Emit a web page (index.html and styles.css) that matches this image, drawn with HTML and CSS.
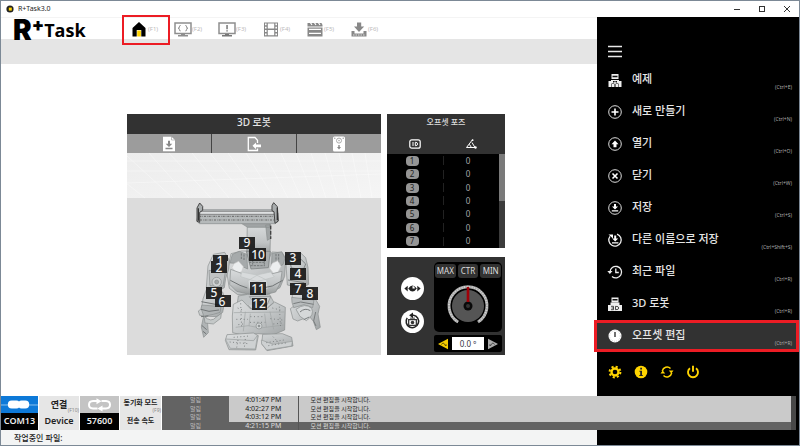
FILE: index.html
```html
<!DOCTYPE html>
<html lang="ko">
<head>
<meta charset="utf-8">
<title>R+Task3.0</title>
<link rel="stylesheet" href="styles.css">
</head>
<body>
<div class="app">
  <header class="titlebar">
    <svg class="app-icon" viewBox="0 0 8 8"><circle cx="4" cy="4" r="3.6" fill="#222"/><rect x="2.8" y="2.6" width="3" height="3" fill="#ffd400"/></svg>
    <span class="app-title">R+Task3.0</span>
    <button class="win-btn" aria-label="Minimize"><svg viewBox="0 0 8 8"><path d="M1 4.5h6"/></svg></button>
    <button class="win-btn" aria-label="Maximize"><svg viewBox="0 0 8 8"><rect x="1.5" y="1.5" width="5" height="5"/></svg></button>
    <button class="win-btn" aria-label="Close"><svg viewBox="0 0 8 8"><path d="M1 1l6 6M7 1L1 7"/></svg></button>
  </header>

  <div class="stage">
    <nav class="toolbar">
      <div class="logo"><span class="logo-r">R</span><span class="logo-plus">+</span><span class="logo-task">Task</span></div>
      <button class="tool tool-home" aria-label="Home"><svg viewBox="0 0 18 16"><path d="M9 1L2.500 7v8.500h4.200V9h4.600v6.500h4.200V7z" fill="#000"/><path d="M7.200 9.500h3.700v6H7.200z" fill="#ffd400"/></svg><span>(F1)</span></button>
      <button class="tool" aria-label="Task"><svg viewBox="0 0 18 16"><rect x="1" y="2" width="16" height="10.500" fill="none" stroke="#8e8e8e" stroke-width="1.500"/><path d="M6.600 4.500q-1.300 0-1.200 1.300t-1.200 1.400q1.300 0 1.200 1.400t1.200 1.300M11.400 4.500q1.300 0 1.200 1.300t1.200 1.400q-1.300 0-1.200 1.400t-1.200 1.300" fill="none" stroke="#888"/><path d="M7 13h4v1h3v1.500H4V14h3z" fill="#8e8e8e"/></svg><span>(F2)</span></button>
      <button class="tool" aria-label="Alert"><svg viewBox="0 0 18 16"><rect x="1" y="2" width="16" height="10.500" fill="none" stroke="#8e8e8e" stroke-width="1.500"/><path d="M8.300 4h1.500v4.300H8.300zM8.300 9.200h1.500v1.400H8.300zM7 13h4v1h3v1.500H4V14h3z" fill="#777"/></svg><span>(F3)</span></button>
      <button class="tool" aria-label="Motion"><svg viewBox="0 0 18 16"><path d="M2 1.500h14v14H2z" fill="#888"/><path d="M5.800 2.500h6.400v5H5.800zM5.800 9h6.400v5.200H5.800z" fill="#fff"/><path d="M3.800 2.500v12.500M14.200 2.500v12.500" stroke="#fff" stroke-width="1.600" stroke-dasharray="1.800 1.500"/></svg><span>(F4)</span></button>
      <button class="tool" aria-label="Scene"><svg viewBox="0 0 18 16"><path d="M1.500 6.500h15v9h-15zM1.500 2h15v3.500h-15z" fill="#888"/><path d="M4 1l2 3M8 1l2 3M12 1l2 3M15.500 1l1.500 2.500" stroke="#fff" stroke-width="1.200"/><path d="M3 8.300h12M3 12.300h12" stroke="#fff" stroke-width="1.300"/></svg><span>(F5)</span></button>
      <button class="tool" aria-label="Download"><svg viewBox="0 0 18 16"><path d="M7 1.500h4.200v4h3L9 11 4 5.500h3z" fill="#888"/><path d="M1.500 10h3v2.500h9V10h3v5.500h-15z" fill="#888"/><path d="M3 14h12" stroke="#fff" stroke-width=".7" stroke-dasharray="1.500 1"/></svg><span>(F6)</span></button>
    </nav>
    <div class="ribbon"></div>

    <main class="workspace">
      <section class="robot-panel">
        <h2 class="robot-title">3D 로봇</h2>
        <div class="robot-tools">
          <button aria-label="Load pose"><svg viewBox="0 0 14 16"><path d="M1 .7h8.500L13 4v11.300H1z" fill="#fff"/><path d="M9.500.7V4H13" fill="none" stroke="#999" stroke-width=".6"/><path d="M6 4.800h2v3h2.300L7 11 3.700 7.800H6zM3.500 11.800h7v1.400h-7z" fill="#888"/></svg></button>
          <button aria-label="Export pose"><svg viewBox="0 0 14 16"><path d="M10.500 7V4.300L8 1.500H1.300v13h9.200v-2" fill="none" stroke="#fff" stroke-width="1.300"/><path d="M5.500 9.800L9 6.500v2h5v2.700H9v2z" fill="#fff"/></svg></button>
          <button aria-label="Controller"><svg viewBox="0 0 14 16"><rect x="1" y=".5" width="12" height="15" rx="1.500" fill="#fff"/><circle cx="7" cy="4.600" r="2.500" fill="none" stroke="#aaa"/><circle cx="7" cy="4.600" r=".8" fill="#aaa"/><circle cx="2.800" cy="2.300" r=".7" fill="#999"/><circle cx="11.200" cy="2.300" r=".7" fill="#999"/><path d="M6.300 9h1.400v2H9l-2 2.600L5 11h1.300z" fill="#888"/></svg></button>
        </div>
        <svg class="robot-view" viewBox="0 0 254 202" role="img" aria-label="3D 로봇">
          <defs>
            <linearGradient id="metal" x2="1" y2="1"><stop stop-color="#dcdedf"/><stop offset=".45" stop-color="#c8cbcc"/><stop offset="1" stop-color="#a0a4a5"/></linearGradient>
            <linearGradient id="plate" x2="0" y2="1"><stop stop-color="#d9dcdd"/><stop offset=".6" stop-color="#c0c3c4"/><stop offset="1" stop-color="#979b9b"/></linearGradient>
            <linearGradient id="sky" x2="1" y2="1"><stop stop-color="#ececec"/><stop offset="1" stop-color="#f5f5f5"/></linearGradient>
          </defs>
          <rect width="254" height="202" fill="#dcdcdc"/>
          <rect width="254" height="45" fill="url(#sky)"/>
          <path d="M0 18h254M0 30l254-9M0 8h254M-20 15l38 30M0 3l46 42M22 0l40 45M42 0l42 45M65 0l37 45M83 0l36 45M101 0l32 45M119 0l28 45M137 0l24 45M154 0l20 45M169 0l18 45M184 0l15 45M198 0l13 45M212 0l11 45M225 0l9 45M238 0l7 45" fill="none" stroke="#fff" stroke-width=".6" opacity=".6"/>
          <g transform="translate(63 42) scale(.33333)" stroke="#888c8d" stroke-width="2" stroke-linejoin="round">
            <path d="M172 88h70l-2 92h-70z" fill="url(#plate)"/>
            <path d="M154 85h85v12h-66zM227 90h15v40l-10 6z" fill="#a0a4a5"/>
            <path d="M242 92v40" stroke="#444" stroke-width="4" stroke-dasharray="11 5"/>
            <path d="M28 44h224l12 10v26l-10 6H28l-8-8z" fill="#b5b9ba"/>
            <path d="M30 49h222l4 9H27z" fill="#dee0e1" stroke="#666"/>
            <path d="M28 64h226M30 75h224" fill="none" stroke="#666" stroke-width="3" stroke-dasharray="6 3 2 3"/>
            <path d="M21 79V39l8-15 9 10v12l-9 6v30zM246 47V32l5-9 11 12 3 43-10 7-3-35z" fill="#a9adae" stroke="#444" stroke-width="3"/>
            <path d="M25 40v37M262 38v38" stroke="#333" stroke-width="4"/>
            <path d="M123 176l32-8h15l12 46 38 2 18-28 8-17 31 2 10 17-3 54-14 34-39 21h-88l-25-19-7-44z" fill="url(#metal)"/>
            <path d="M127 178l21-9 22 9 3 44-36-17-17-1zM246 176l29-6 10 20-6 19-35 14z" fill="#a6aaab"/>
            <path d="M169 169h72l-6 49-52 4z" fill="#a8acad" stroke="#747879"/>
            <path d="M177 202h48M181 212h44M188 174v35M223 174v35M154 175v20M162 178v18M258 177v24M266 177v24" fill="none" stroke="#737778" stroke-width="3" stroke-dasharray="7 3"/>
            <path d="M132 206l14-7 14 16-5 15-13 6-16-18zM247 205l16-8 10 17-9 18-13 4-12-16z" fill="#eceeef" stroke="#ccc"/>
            <path d="M122 223l35 13 42 18 48-18 29-7-4 32-15 30-27 7h-52l-38-9-21-21z" fill="url(#plate)"/>
            <path d="M155 231l45 9 42-9 11 15-52 14-49-15zM174 257l27-16 29 14 4 25-29 11-28-12z" fill="#d8dbdc" stroke="#bec2c3"/>
            <path d="M121 256l29 15 22 8M278 256l-31 17-20 4" fill="none" stroke="#707475" stroke-width="3"/>
            <path d="M70 178l34-6 14 24-2 27-9 27-4 28-13 7-41-7 5-65z" fill="url(#metal)"/>
            <path d="M57 226l49 5-7 42-39-1z" fill="#c0c3c4"/>
            <circle cx="80" cy="261" r="14" fill="#cfd2d3"/><circle cx="80" cy="261" r="6" fill="#a2a6a7"/>
            <path d="M50 282l48 9 7 24-7 37-17 13-25-1-27-3-4-13 9-6 5-30z" fill="url(#metal)"/>
            <path d="M36 330l57 5-3 17-20 6-24 5 7 25 2 25-14 14-7-31 7-34-8-22z" fill="#b0b4b5"/>
            <path d="M34 320l59 11M33 343l24 6 30-4M33 365l22-2M35 391l15 13M39 409l10 8" fill="none" stroke="#707475" stroke-width="3"/>
            <path d="M42 363q21 22 37 3l15-11-2 15-22 17-25-3z" fill="#c4c8c8"/>
            <path d="M287 180l44-7 16 15 7 29 2 51-20 11-44-9-3-47z" fill="url(#metal)"/>
            <path d="M301 203l32-10 14 14-7 17-36-5zM294 255l49 8" fill="none" stroke="#808586" stroke-width="3"/>
            <path d="M306 277l65 4 5 31 13 22-5 23 7 40-12 7-9-25-12-15-35 14-14-6-8-31 11-8-5-27z" fill="url(#metal)"/>
            <path d="M305 307l67 8-4 23-26-9-31 9-5-16z" fill="#b8bcbd"/>
            <path d="M318 343q28-21 47-3 9 20-16 37l-19-13z" fill="#d5d8d9"/>
            <path d="M330 351q15-14 31-4M341 374l17-8M377 351l-6 27 7 15M310 326l22-5 39 7" fill="none" stroke="#787c7d" stroke-width="3"/>
            <path d="M145 303l28-5 66 1 12 22-13 20-76-2-20-14z" fill="#c0c4c5"/>
            <path d="M178 305h64l-12 27-34-6zM173 330l20 20h31l21-24" fill="#cdd0d1" stroke="#808485"/>
            <path d="M130 328l26-13 26 27h47l25-21 32 16-2 68-33 14-49-3-34 7-40-10-1-50z" fill="url(#metal)"/>
            <path d="M131 353l152-2M137 397l38-5 36 7 70-9M166 350l-6 59M240 350l11 53M181 356l-4 38M224 356l5 41" fill="none" stroke="#a0a4a5" stroke-width="2"/>
            <path d="M143 339l16 7M139 373h35M145 389l20-3M247 339l32 8M241 371l36 4M250 387l28-3M181 365h44M180 382h46M152 325l3 74M268 335l4 64" fill="none" stroke="#808485" stroke-width="3" stroke-dasharray="3 8"/>
            <circle cx="207" cy="393" r="9" fill="#d4d7d8"/><circle cx="207" cy="393" r="3" fill="#8b8f90"/>
            <path d="M111 419l79-5 15 8-8 43-80-1-11-28zM218 418l59-2 28 11 4 26-78 14-16-20z" fill="url(#metal)"/>
            <path d="M107 432l84 5 12-17-7 42-75-2-14-26zM214 435l36 13 57-9-2 14-75 12-15-19z" fill="#ced1d2" stroke="#979b9c"/>
            <path d="M119 441l56 5M131 427l47-4M229 443l53-8M235 452l59-9M144 435l-4 23M166 432l-3 26M249 425l17 18" fill="none" stroke="#808485" stroke-width="3" stroke-dasharray="3 7"/>
          </g>
          <g class="joint-tags">
            <path class="tag-boxes" d="M86 102h15v6H86zM84 108h16v12H84zM158 99h16v13h-16zM163 115h16v12h-16zM79 134h16v12H79zM88 142h16v12H88zM163 130h16v12h-16zM175 134h16v13h-16zM112 84h16v12h-16zM122 95h17v13h-17zM123 129h16v13h-16zM125 145h15v12h-15z"/>
            <text x="93" y="112">1</text><text x="92" y="119">2</text><text x="166" y="109">3</text><text x="171" y="125">4</text><text x="87" y="144">5</text><text x="95" y="153">6</text><text x="171" y="140">7</text><text x="183" y="145">8</text><text x="120" y="94">9</text><text x="131" y="106">10</text><text x="131" y="140">11</text><text x="132" y="155">12</text>
          </g>
        </svg>
      </section>

      <div class="side-panels">
        <section class="pose-panel">
          <div class="pose-head">
            <h2>오프셋 포즈</h2>
            <div class="pose-icons">
              <svg viewBox="0 0 12 10"><rect x=".8" y=".8" width="10.400" height="8.400" rx="2" fill="none" stroke="#fff" stroke-width="1.200"/><path d="M4 3v4M6.300 3.300v3.400h.8q1.400-.2 1.400-1.700T7.100 3.300z" fill="none" stroke="#fff"/></svg>
              <svg viewBox="0 0 12 10"><path d="M7.500.7L1.500 8.500h9M4 5.500q2 .8 2.100 2.800M7 3.500L9.700 8" fill="none" stroke="#fff"/><circle cx="10.500" cy="8.500" r="1.200" fill="#fff"/><circle cx="7.600" cy="1.200" r=".9" fill="#fff"/></svg>
            </div>
          </div>
          <div class="pose-body">
            <table class="pose-table">
              <tr><td><span>1</span></td><td>0</td></tr>
              <tr><td><span>2</span></td><td>0</td></tr>
              <tr><td><span>3</span></td><td>0</td></tr>
              <tr><td><span>4</span></td><td>0</td></tr>
              <tr><td><span>5</span></td><td>0</td></tr>
              <tr><td><span>6</span></td><td>0</td></tr>
              <tr><td><span>7</span></td><td>0</td></tr>
            </table>
            <div class="pose-scroll"><div class="pose-thumb"></div></div>
          </div>
        </section>

        <section class="dial-panel">
          <div class="dial-actions">
            <button aria-label="View"><svg viewBox="0 0 24 24"><path d="M3.500 12L7 9v6zM20.500 12L17 9v6z" fill="#222"/><path d="M7.500 12q4.500-6.500 9 0-4.500 6.500-9 0z" fill="#222"/><path d="M12 9.500V12h2.500A2.500 2.500 0 0 0 12 9.500z" fill="#fff"/></svg></button>
            <button aria-label="Reset"><svg viewBox="0 0 24 24"><path d="M11 5.500h2a6.500 6.500 0 1 1-6.500 2.700" fill="none" stroke="#222" stroke-width="1.600"/><path d="M12.500 2.500v6L8.500 5.500z" fill="#222"/><path d="M8 10h8v6H8z" fill="none" stroke="#333" stroke-width="1.300"/><circle cx="12" cy="13" r="1.800" fill="#333"/><path d="M9.500 8.500h5" stroke="#333"/></svg></button>
          </div>
          <div class="dial-main">
            <div class="dial-box">
              <div class="dial-buttons"><button>MAX</button><button>CTR</button><button>MIN</button></div>
              <svg class="dial" viewBox="0 0 44 44">
                <path d="M12 37A19 19 0 1 1 32 37" fill="none" stroke="#aaa" stroke-width="3"/>
                <path d="M12 37A19 19 0 1 1 32 37" fill="none" stroke="#ddd" stroke-width="2" stroke-dasharray=".7 1.800"/>
                <circle cx="22" cy="21" r="16" fill="#555"/><circle cx="22" cy="21" r="4.500" fill="#090909"/><circle cx="22" cy="21" r="2" fill="#333"/><path d="M20.700 2h2.600v15h-2.600z" fill="#a00008"/>
              </svg>
            </div>
            <div class="dial-value">
              <button aria-label="Decrease"><svg viewBox="0 0 12 12"><path d="M11 .8v10.400L1 6z" fill="#f5cc00"/><path d="M4.500 6.500q1.500-3 4 .8" fill="none" stroke="#584900"/><path d="M7.500 8h2V6z" fill="#584900"/></svg></button>
              <input type="text" value="0.0 º" aria-label="Offset">
              <button aria-label="Increase"><svg viewBox="0 0 12 12"><path d="M1 .8v10.400L11 6z" fill="#aaa"/><path d="M7.500 6.500q-1.500-3-4 .8" fill="none" stroke="#444"/><path d="M4.500 8h-2V6z" fill="#444"/></svg></button>
            </div>
          </div>
        </section>
      </div>
    </main>
  </div>

  <aside class="menu">
    <button class="menu-toggle" aria-label="Menu"><svg viewBox="0 0 14 12"><path d="M0 1h14M0 6h14M0 11h14" stroke="#e8e8e8" stroke-width="1.600"/></svg></button>
    <a class="item" href="#"><svg viewBox="0 0 16 16"><path d="M4.500 2h7v5h-7zM4 8h8v3.500H4zM1.500 9h3v6h-3zM11.500 9h3v6h-3zM5 12h2.500v3H5zM8.500 12H11v3H8.500z" fill="#eee"/><path d="M5.500 3.800h5v1.500h-5zM6 9h4v1.500H6z" fill="#111"/><path d="M7.300 9.500h1.400V12H7.300z" fill="#eee"/></svg><span>예제</span><kbd>(Ctrl+E)</kbd></a>
    <a class="item" href="#"><svg viewBox="0 0 16 16"><circle cx="8" cy="8" r="6.300" fill="none" stroke="#ddd"/><path d="M8 4.500v7M4.500 8h7" stroke="#fff" stroke-width="1.600"/></svg><span>새로 만들기</span><kbd>(Ctrl+N)</kbd></a>
    <a class="item" href="#"><svg viewBox="0 0 16 16"><circle cx="8" cy="8" r="6.300" fill="none" stroke="#ddd"/><path d="M8 4.500l3.500 3.700h-2v3h-3v-3h-2z" fill="#fff"/></svg><span>열기</span><kbd>(Ctrl+O)</kbd></a>
    <a class="item" href="#"><svg viewBox="0 0 16 16"><circle cx="8" cy="8" r="6.300" fill="none" stroke="#ddd"/><path d="M5.500 5.500l5 5M10.500 5.500l-5 5" stroke="#fff" stroke-width="1.600"/></svg><span>닫기</span><kbd>(Ctrl+W)</kbd></a>
    <a class="item" href="#"><svg viewBox="0 0 16 16"><circle cx="8" cy="8" r="6.300" fill="none" stroke="#ddd"/><path d="M7 4h2v2.500h2L8 9.500l-3-3h2zM4.800 10.300h6.400v1.200H4.800z" fill="#fff"/></svg><span>저장</span><kbd>(Ctrl+S)</kbd></a>
    <a class="item" href="#"><svg viewBox="0 0 16 16"><path d="M10 2.100A6.200 6.200 0 1 1 3 4.300" fill="none" stroke="#eee" stroke-width="1.300"/><path d="M1.500 2.500H6V6.500zM7.200 3.500h2v3h2L8.200 9.500l-3-3h2zM5 10.300h6.400v1.200H5z" fill="#fff"/></svg><span>다른 이름으로 저장</span><kbd>(Ctrl+Shift+S)</kbd></a>
    <a class="item" href="#"><svg viewBox="0 0 16 16"><path d="M3 8A5.800 5.800 0 1 1 5 12.500" fill="none" stroke="#eee" stroke-width="1.300"/><path d="M.3 7h5.200L2.900 10z" fill="#eee"/><path d="M8.800 4.500v4h3" fill="none" stroke="#eee" stroke-width="1.300"/></svg><span>최근 파일</span><kbd>(Ctrl+R)</kbd></a>
    <a class="item" href="#"><svg viewBox="0 0 16 16"><path d="M4.500 1.500h7v4.700h-7zM3.500 6.500h9V9h-9zM1 9h14v6H1z" fill="#eee"/><path d="M5.500 3h5v1.500h-5z" fill="#111"/><path d="M4 10.300h2.500v3.400H4M4.500 12h2M8.500 10.300v3.400q3.300.1 3.300-1.700t-3.300-1.700z" fill="none" stroke="#222" stroke-width=".8"/></svg><span>3D 로봇</span><kbd>(Ctrl+R)</kbd></a>
    <a class="item item-active" href="#"><svg viewBox="0 0 16 16"><circle cx="8" cy="8" r="6.500" fill="#fff"/><circle cx="8" cy="8" r="5.300" fill="none" stroke="#bbb" stroke-dasharray=".6 1.500"/><path d="M8 4v5" stroke="#222" stroke-width="1.300"/></svg><span>오프셋 편집</span><kbd>(Ctrl+R)</kbd></a>
    <div class="menu-foot">
      <button aria-label="Settings"><svg viewBox="0 0 14 14"><circle cx="7" cy="7" r="3.500" fill="none" stroke="#ffd400" stroke-width="2.300"/><circle cx="7" cy="7" r="5.400" fill="none" stroke="#ffd400" stroke-width="2" stroke-dasharray="2.120 2.120"/></svg></button>
      <button aria-label="Info"><svg viewBox="0 0 14 14"><circle cx="7" cy="7" r="6.300" fill="#ffd400"/><path d="M6.200 2.800H8v1.700H6.200zM5.400 5.700H8v4.200h.8V11H5.300V9.900h.9V6.800h-.8z" fill="#222"/></svg></button>
      <button aria-label="Refresh"><svg viewBox="0 0 14 14"><path d="M2.300 6A4.900 4.900 0 0 1 10.500 3.500M11.700 8A4.900 4.900 0 0 1 3.500 10.500" fill="none" stroke="#ffd400" stroke-width="1.500"/><path d="M8.800 5.500h4.700L11.300 8.400zM5.200 8.500H.5l2.200-2.900z" fill="#ffd400"/></svg></button>
      <button aria-label="Power"><svg viewBox="0 0 14 14"><path d="M4 3.200a5 5 0 1 0 6 0" fill="none" stroke="#ffd400" stroke-width="1.900"/><path d="M7 .8v6" stroke="#ffd400" stroke-width="1.900"/></svg></button>
    </div>
  </aside>

  <section class="status">
    <button class="cell cell-link" aria-label="Connect"><svg viewBox="0 0 38 17"><path d="M0 9h38" stroke="#8fc4f0"/><path d="M7 8.500q0-4 4-4h5q1.800 0 2.500 1 .7-1 2.500-1h4q4 0 4 4t-4 4h-4q-1.800 0-2.500-1-.7 1-2.500 1h-5q-4 0-4-4z" fill="#fff"/></svg></button>
    <button class="cell">연결<small>(F10)</small></button>
    <button class="cell cell-sync" aria-label="Sync"><svg viewBox="0 0 38 17"><path d="M17 12.500h-4.500q-4-.2-4-3.700t4-3.700H17M21 5.100h4.500q4 .2 4 3.700t-4 3.700H19" fill="none" stroke="#fff" stroke-width="2"/><path d="M16 2.200l5 3-5 3zM22 9.500v6l-5-3z" fill="#fff"/></svg></button>
    <button class="cell cell-mode">동기화 모드<small>(F9)</small></button>
    <div class="cell cell-dark">COM13</div>
    <div class="cell">Device</div>
    <div class="cell cell-dark">57600</div>
    <div class="cell cell-speed">전송 속도</div>
    <div class="log">
      <table class="log-table">
        <tr><td>알림</td><td>4:01:47 PM</td><td>모션 편집을 시작합니다.</td></tr>
        <tr><td>알림</td><td>4:02:27 PM</td><td>모션 편집을 시작합니다.</td></tr>
        <tr><td>알림</td><td>4:03:12 PM</td><td>모션 편집을 시작합니다.</td></tr>
        <tr class="selected"><td>알림</td><td>4:21:15 PM</td><td>모션 편집을 시작합니다.</td></tr>
      </table>
      <div class="log-scroll"></div>
    </div>
  </section>
  <footer class="footer">작업중인 파일:</footer>
</div>
</body>
</html>
```
FILE: styles.css
```css
* { box-sizing: border-box; }

body {
  margin: 0;
  background: #fff;
  color: #222;
  font-family: "Noto Sans", "Noto Sans CJK KR", sans-serif;
}

button {
  margin: 0;
  padding: 0;
  border: 0;
  background: none;
  color: inherit;
  font: inherit;
}

svg { display: block; }
h2 { margin: 0; font-weight: 500; }

.app {
  display: grid;
  grid-template-columns: minmax(0, 1fr) 202px;
  grid-template-rows: 16px 1fr 34px 15px;
  min-height: 100vh;
  border: 1px solid #7c8996;
}

/* Title bar */
.titlebar {
  grid-column: 1 / 3;
  display: flex;
  align-items: center;
  padding: 0 8px 0 5px;
  background: #fff;
}
.app-icon { width: 8px; height: 8px; }
.app-title { flex: 1; margin-left: 4px; font-size: 7px; line-height: 10px; }
.win-btn { margin-left: 17px; }
.win-btn svg { width: 8px; height: 8px; fill: none; stroke: #333; stroke-width: 1; }

/* Toolbar */
.stage { grid-column: 1; grid-row: 2; border-top: 1px solid #f4f4f4; }
.toolbar { display: flex; align-items: center; height: 21px; padding-left: 12px; }
.logo {
  display: flex;
  width: 117px;
  padding-top: 3px;
  color: #000;
}
.logo-r { font: 900 28px/22px Inter, sans-serif; }
.logo-plus { font: 900 18px/12px Inter, sans-serif; }
.logo-task { font: 700 18px/22px "Open Sans", sans-serif; }
.tool { display: flex; align-items: center; width: 44px; color: #bbb; font-size: 6px; line-height: 8px; }
.tool svg { width: 18px; height: 16px; }
.tool-home { position: relative; }
.tool-home::after {
  content: "";
  position: absolute;
  inset: -6px 4px -8px -8px;
  border: 2px solid #ec1c24;
}
.ribbon { height: 25px; background: #e5e5e5; }

/* Workspace */
.workspace {
  display: grid;
  grid-template-columns: 254fr 118fr;
  align-items: start;
  gap: 6px;
  padding: 50px 92px 0 126px;
}
.robot-title {
  background: #323232;
  color: #e6e6e6;
  font-size: 10px;
  line-height: 17px;
  padding-bottom: 3px;
  text-align: center;
}
.robot-tools { display: grid; grid-template-columns: repeat(3, 1fr); gap: 1px; background: #444; }
.robot-tools button { display: grid; place-items: center; height: 19px; background: #9c9c9c; }
.robot-tools svg { width: 14px; height: 16px; }
.robot-view { width: 100%; }
.tag-boxes { fill: #111; fill-opacity: .88; }
.joint-tags text { fill: #f2f2f2; font-size: 12px; font-weight: 500; text-anchor: middle; }

.side-panels { display: grid; gap: 9px; }
.pose-head { background: #323232; color: #ddd; text-align: center; }
.pose-head h2 { font-size: 8px; line-height: 16px; }
.pose-icons { display: grid; grid-template-columns: 1fr 1fr; justify-items: center; padding: 9px 6px 5px 0; }
.pose-icons svg { width: 12px; height: 10px; }
.pose-body { display: flex; height: 94px; background: #000; }
.pose-table { flex: 1; height: 94px; border-collapse: collapse; color: #aaa; font-size: 8px; line-height: 10px; text-align: center; }
.pose-table td { width: 50%; padding: 0; }
.pose-table td + td { background: linear-gradient(#222, #222) left / 1px 9px no-repeat; }
.pose-table td:first-child { padding-right: 6px; }
.pose-table td:last-child { padding-right: 6px; }
.pose-table span { display: block; width: 13px; margin: 0 auto; border-radius: 4px; background: #959595; color: #222; }
.pose-scroll { width: 6px; background: #3c3c3c; }
.pose-thumb { height: 50%; background: #7a7a7a; }

.dial-panel { display: flex; padding: 5px 3px 3px; background: #323232; }
.dial-actions { flex: 1; display: flex; flex-direction: column; align-items: center; gap: 10px; padding-top: 15px; }
.dial-actions button { border-radius: 50%; background: #fff; }
.dial-actions svg { width: 23px; height: 23px; }
.dial-main { width: 68px; }
.dial-box { height: 70px; padding: 2px 1px; border-radius: 5px; background: #000; }
.dial-buttons { display: grid; grid-template-columns: repeat(3, 1fr); gap: 2px; }
.dial-buttons button { border-radius: 3px; background: #323232; color: #ddd; font-size: 8px; line-height: 14px; }
.dial { width: 44px; height: 44px; margin: 7px auto 0; }
.dial-value { display: flex; align-items: center; justify-content: space-between; height: 17px; margin-top: 3px; padding: 0 3px; border-radius: 2px; background: #000; }
.dial-value svg { width: 12px; height: 12px; }
.dial-value input { width: 32px; height: 13px; padding: 0; border: 0; background: #fff; color: #334; font: 8px/13px "Noto Sans", sans-serif; text-align: center; }

/* Drawer menu */
.menu { grid-column: 2; grid-row: 2 / 5; background: #000; color: #e6e6e6; }
.menu-toggle { display: block; padding: 28px 0 6px 11px; }
.menu-toggle svg { width: 14px; height: 13px; }
.item {
  position: relative;
  display: flex;
  align-items: center;
  height: 32px;
  padding: 0 7px 0 10px;
  color: inherit;
  font-size: 11px;
  font-weight: 500;
  line-height: 16px;
  text-decoration: none;
}
.item svg { width: 16px; height: 16px; }
.item span { flex: 1; margin-left: 9px; padding-bottom: 2px; }
.item kbd { align-self: flex-end; padding-bottom: 5px; color: #aaa; font: 5px/8px "Noto Sans", sans-serif; }
.item-active { background: #323232; }
.item-active::after {
  content: "";
  position: absolute;
  inset: 0 0 0 -3px;
  border: 3px solid #ec1c24;
}
.menu-foot { display: flex; gap: 12px; padding: 13px 0 0 11px; }
.menu-foot svg { width: 14px; height: 14px; }

/* Status strip */
.status {
  grid-column: 1 / 3;
  grid-row: 3;
  z-index: 1;
  display: grid;
  grid-template-columns: 37px 40px 39px 41px minmax(0, 1fr);
  grid-template-rows: 17px 17px;
  column-gap: 1px;
  margin-right: 3px;
}
.cell {
  position: relative;
  background: #e6e6e6;
  color: #222;
  font-size: 9px;
  font-weight: 600;
  line-height: 16px;
  text-align: center;
}
.cell svg { width: 100%; height: 17px; }
.cell small { position: absolute; right: 0; bottom: 0; color: #888; font-size: 5px; font-weight: 400; line-height: 5px; }
.cell-link { background: #0d79d8; }
.cell-sync { background: #c4c4c4; }
.cell-dark { background: #000; color: #eee; }
.cell-mode, .cell-speed { font-size: 7px; }
.cell-mode { line-height: 12px; padding-bottom: 4px; }
.log { grid-column: 5; grid-row: 1 / 3; display: flex; background: #cacaca; }
.log-table { flex: 1; height: 34px; border-collapse: collapse; table-layout: fixed; font-size: 7px; line-height: 8px; }
.log-table td { padding: 0; }
.log-table td:nth-child(1) { width: 67px; background: #636363; color: #bbb; font-size: 6px; text-align: center; }
.log-table td:nth-child(2) { width: 69px; text-align: center; }
.log-table td:nth-child(3) { padding-left: 12px; border-left: 1px solid #555; font-size: 6px; }
.log-table .selected { background: #636363; color: #ddd; }
.log-scroll { width: 5px; background: #484848; }
.footer { grid-column: 1; grid-row: 4; padding-left: 13px; background: #f3f4f4; font-size: 8px; font-weight: 500; line-height: 15px; }
```
